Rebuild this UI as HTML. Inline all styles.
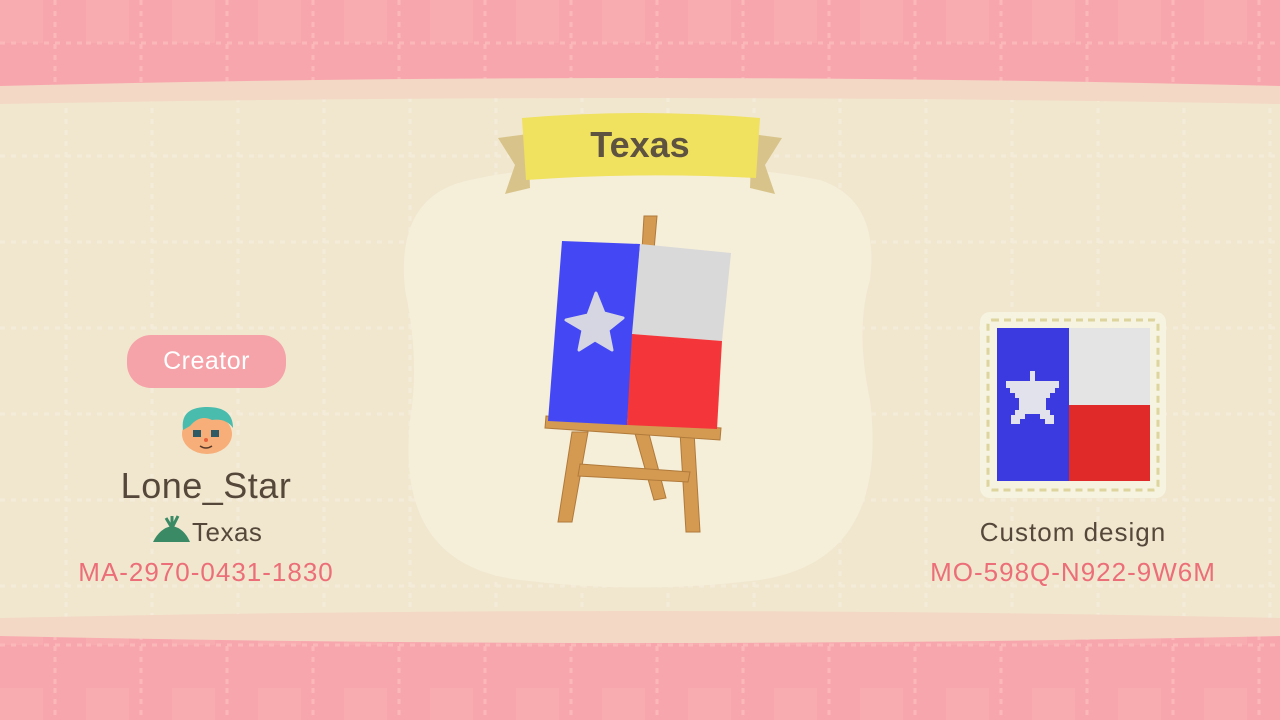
<!DOCTYPE html>
<html><head><meta charset="utf-8"><style>
html,body{margin:0;padding:0;width:1280px;height:720px;overflow:hidden;background:#f1e7cf;font-family:"Liberation Sans",sans-serif}
.t{position:absolute;text-align:center;white-space:nowrap}
</style></head><body>
<svg width="1280" height="720" style="position:absolute;left:0;top:0">
<defs>
<pattern id="pk" width="86" height="86" patternUnits="userSpaceOnUse">
<rect width="86" height="86" fill="#f8a6ad"/>
<rect x="0" y="0" width="43" height="43" fill="#f9acaf"/>
<line x1="0" y1="43" x2="86" y2="43" stroke="#fab8b9" stroke-width="3" stroke-dasharray="5 6"/>
<line x1="55" y1="0" x2="55" y2="86" stroke="#fab8b9" stroke-width="3" stroke-dasharray="5 6"/>
</pattern>
<pattern id="bg" width="86" height="86" patternUnits="userSpaceOnUse">
<rect width="86" height="86" fill="#f1e7cf"/>
<line x1="0" y1="70" x2="86" y2="70" stroke="#f4ecd9" stroke-width="3" stroke-dasharray="5 6"/>
<line x1="66" y1="0" x2="66" y2="86" stroke="#f4ecd9" stroke-width="3" stroke-dasharray="5 6"/>
</pattern>
</defs>
<rect width="1280" height="720" fill="url(#bg)"/>
<path d="M0 0H1280V88Q640 72 0 88Z" fill="url(#pk)"/>
<path d="M0 86Q640 70 1280 86V104Q640 92 0 104Z" fill="#f3d8c5"/>
<path d="M0 634Q640 648 1280 634V720H0Z" fill="url(#pk)"/>
<path d="M0 618Q640 604 1280 618V636Q640 650 0 636Z" fill="#f3d8c5"/>
<path d="M470 180Q560 160 640 175Q720 160 820 180Q880 200 870 280Q855 330 870 400Q890 560 760 580Q640 595 520 580Q395 565 410 420Q420 360 405 290Q395 195 470 180Z" fill="#f5eed9"/>
<!-- ribbon -->
<path d="M498 138L528 134L530 188L505 194L515 165Z" fill="#d8c48a"/>
<path d="M782 138L752 134L750 188L775 194L765 165Z" fill="#d8c48a"/>
<path d="M522 118Q640 108 760 118L756 178Q640 172 526 180Z" fill="#f0e15e"/>
<!-- easel -->
<g fill="#d49a52" stroke="#b07a3a" stroke-width="1">
<path d="M644 216L657 216L654 250L642 250Z"/>
<path d="M634 430L648 430L666 498L654 500Z"/>
<path d="M572 432L588 432L572 522L558 522Z"/>
<path d="M680 432L694 432L700 532L686 532Z"/>
<path d="M580 464L690 472L688 482L578 476Z"/>
<path d="M546 416L721 428L720 440L545 428Z"/>
</g>
<path d="M562 241L640 244L627 425L548 421Z" fill="#4448f4"/>
<path d="M640 244L731 253L722 341L632 334Z" fill="#d9d9d9"/>
<path d="M632 334L722 341L717 429L627 425Z" fill="#f4363a"/>
<path d="M596 293L604 313L623 318L608 330L612 350L595 340L579 350L583 330L566 320L588 315Z" fill="#d6d6e2" stroke="#d6d6e2" stroke-width="3" stroke-linejoin="round"/>
<!-- thumbnail -->
<rect x="980" y="312" width="186" height="186" rx="10" fill="#f6f3e0"/>
<rect x="988" y="320" width="170" height="170" rx="4" fill="none" stroke="#ddd59d" stroke-width="3" stroke-dasharray="7 5"/>
<rect x="997" y="328" width="72" height="153" fill="#3a3ae0"/>
<rect x="1069" y="328" width="81" height="77" fill="#e4e4e4"/>
<rect x="1069" y="405" width="81" height="76" fill="#e02a2a"/>
<path d="M1030 371H1035V381H1059V388H1055V393H1050V398H1046V410H1050V415H1054V424H1045V419H1040V414H1025V419H1020V424H1011V415H1015V410H1019V398H1015V393H1010V388H1006V381H1030Z" fill="#e2e2ec"/>
<!-- avatar -->
<ellipse cx="207" cy="434" rx="25" ry="20" fill="#f7ae78"/>
<path d="M183 430Q180 408 205 407Q233 406 233 428Q226 418 212 420Q200 414 190 426Z" fill="#49bcae"/>
<rect x="193" y="430" width="8" height="7" fill="#2e5a66"/><rect x="211" y="430" width="8" height="7" fill="#2e5a66"/>
<circle cx="206" cy="440" r="2" fill="#e8603a"/>
<path d="M200 446Q206 450 212 446" stroke="#5a3a2a" fill="none" stroke-width="1.5"/>
<!-- island -->
<path d="M153 542Q160 528 172 526Q184 528 190 542Z" fill="#3b8a66"/>
<path d="M172 528L166 518M172 528L178 516M172 528L172 516" stroke="#3b8a66" stroke-width="3"/>
</svg>
<div class="t" style="left:520px;top:124px;width:240px;font-size:36px;font-weight:bold;color:#5e5240">Texas</div>
<div style="position:absolute;left:127px;top:335px;width:159px;height:53px;border-radius:24px;background:#f5a3a8"></div>
<div class="t" style="left:127px;top:347px;width:159px;font-size:25px;color:#fff;letter-spacing:0.5px">Creator</div>
<div class="t" style="left:80px;top:465px;width:252px;font-size:36px;color:#55483a;letter-spacing:0.5px">Lone_Star</div>
<div class="t" style="left:192px;top:517px;font-size:26px;color:#55483a;letter-spacing:0.5px">Texas</div>
<div class="t" style="left:56px;top:557px;width:300px;font-size:26px;color:#ec6e78;letter-spacing:1px">MA-2970-0431-1830</div>
<div class="t" style="left:923px;top:517px;width:300px;font-size:26px;color:#55483a;letter-spacing:1px">Custom design</div>
<div class="t" style="left:923px;top:557px;width:300px;font-size:26px;color:#ec6e78;letter-spacing:1px">MO-598Q-N922-9W6M</div>
</body></html>
